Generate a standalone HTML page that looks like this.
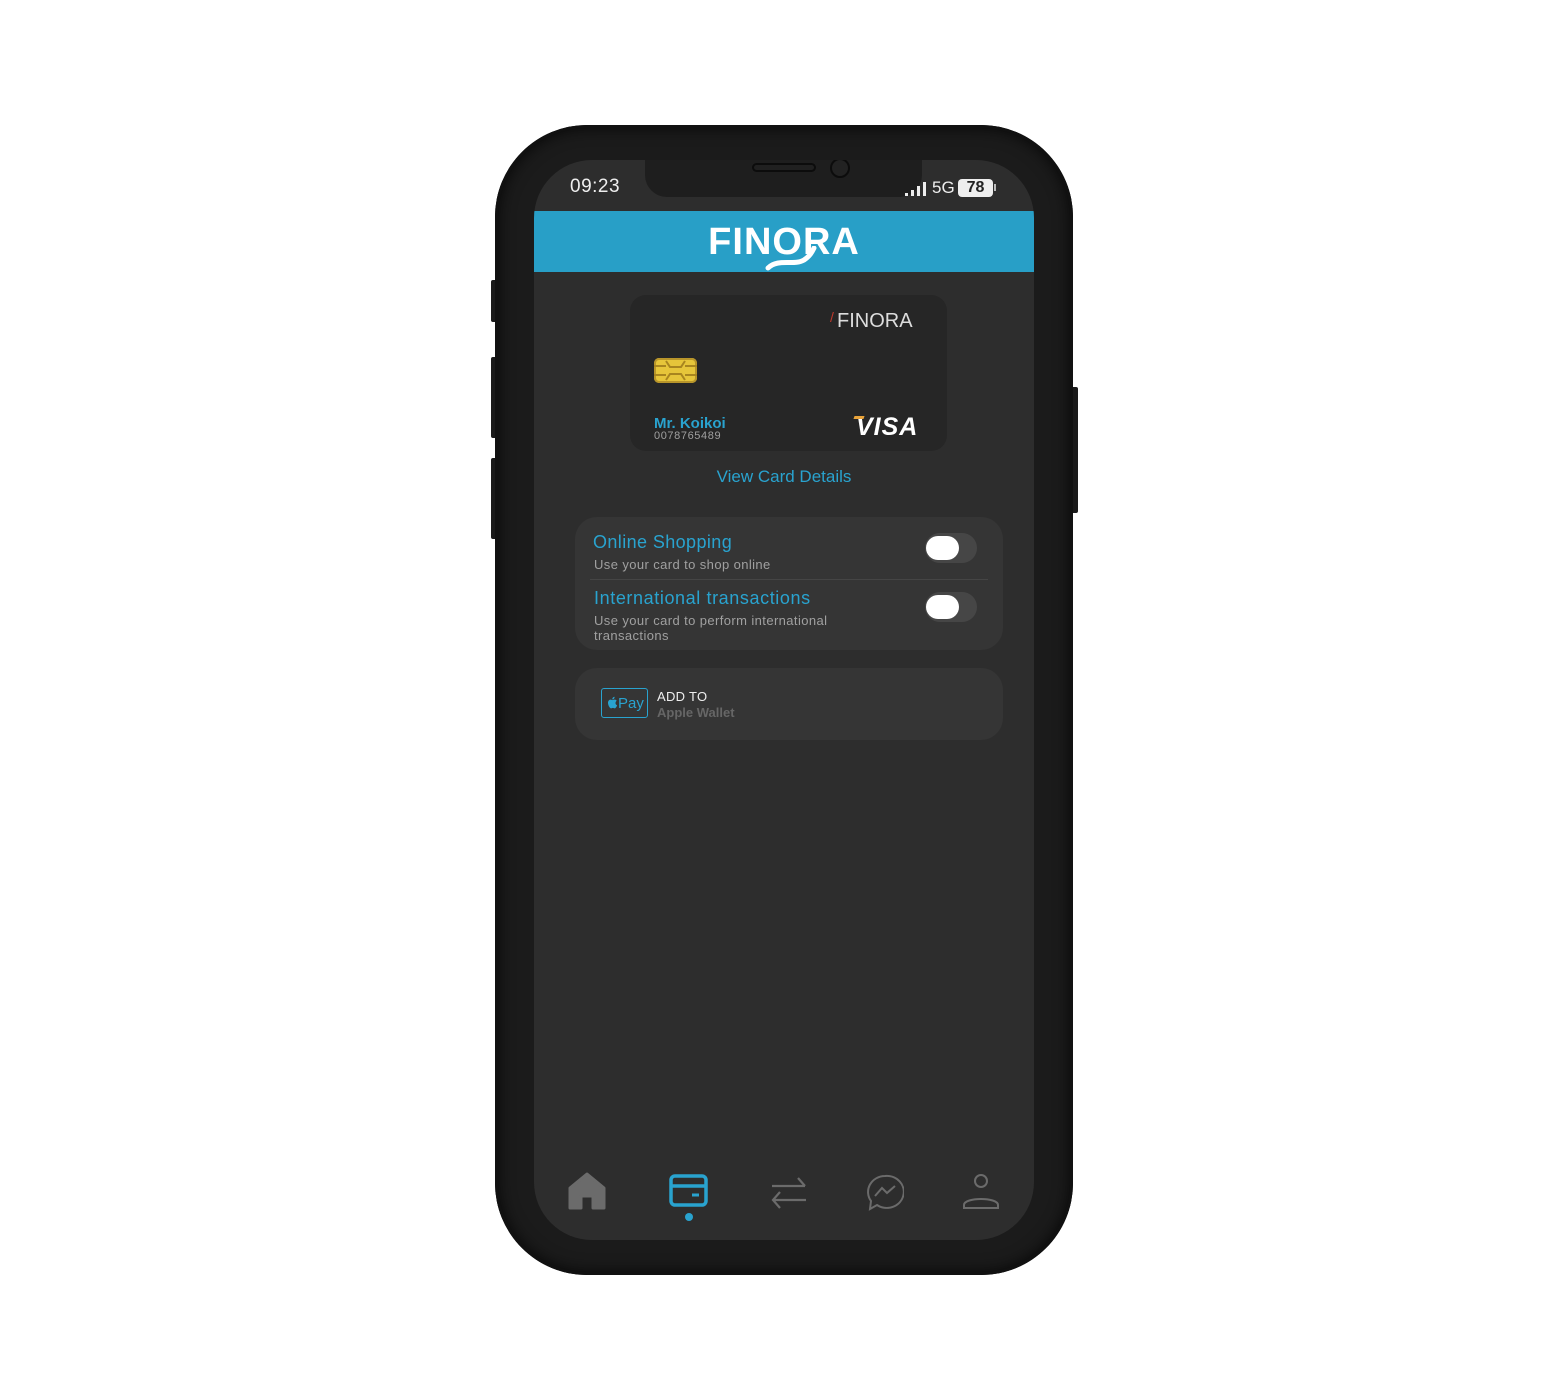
<!DOCTYPE html>
<html><head><meta charset="utf-8"><style>
*{margin:0;padding:0;box-sizing:border-box}
body{width:1568px;height:1400px;background:#fff;position:relative;overflow:hidden;font-family:"Liberation Sans","DejaVu Sans",sans-serif}
.abs{position:absolute}
.body{left:495px;top:125px;width:578px;height:1150px;border-radius:92px;background:#1b1b1b;box-shadow:inset 0 0 0 3px #111,inset 0 0 18px #000}
.btn{background:#1a1a1a;border-radius:2px}
.screen{left:534px;top:160px;width:500px;height:1080px;border-radius:58px;background:#2d2d2d;overflow:hidden}
.notch{left:111px;top:0;width:277px;height:37px;background:#1e1e1e;border-radius:0 0 22px 22px}
.hdr{left:0;top:51px;width:500px;height:61px;background:#289fc7}
.card{left:96px;top:135px;width:317px;height:156px;border-radius:16px;background:#262626}
.panel{background:#353535;border-radius:22px}
.t{color:#29a3cf}
.g{color:#a0a0a0}
.tog{width:52px;height:30px;border-radius:15px;background:#464646}
.tog div{position:absolute;left:1px;top:3px;width:33px;height:24px;border-radius:12px;background:#fff}
</style></head><body>
<div class="abs btn" style="left:491px;top:280px;width:6px;height:42px"></div>
<div class="abs btn" style="left:491px;top:357px;width:6px;height:81px"></div>
<div class="abs btn" style="left:491px;top:458px;width:6px;height:81px"></div>
<div class="abs btn" style="left:1071px;top:387px;width:7px;height:126px"></div>
<div class="abs body"></div>
<div class="abs screen">
  <div class="abs notch"></div>
  <div class="abs" style="left:218px;top:3px;width:64px;height:9px;border-radius:5px;border:2px solid #0c0c0c;background:#202020"></div>
  <div class="abs" style="left:296px;top:-2px;width:20px;height:20px;border-radius:50%;border:2px solid #0c0c0c;background:#222"></div>
  <div class="abs" style="left:36px;top:16px;color:#eee;font-size:19px;letter-spacing:.5px">09:23</div>
  <svg class="abs" style="left:370px;top:20px" width="26" height="17"><rect x="1" y="13" width="3" height="3" fill="#eee"/><rect x="7" y="10" width="3" height="6" fill="#eee"/><rect x="13" y="6" width="3" height="10" fill="#eee"/><rect x="19" y="2" width="3" height="14" fill="#eee"/></svg>
  <div class="abs" style="left:398px;top:18px;color:#eee;font-size:17px">5G</div>
  <div class="abs" style="left:424px;top:19px;width:35px;height:18px;border-radius:4px;background:#eee;color:#222;font-size:16px;font-weight:bold;text-align:center;line-height:18px">78</div>
  <div class="abs" style="left:460px;top:24px;width:2px;height:7px;background:#bbb"></div>
  <div class="abs hdr">
    <div class="abs" style="left:0;width:500px;top:10px;text-align:center;color:#fff;font-size:38px;font-weight:bold;letter-spacing:1px">FINORA</div>
    <svg class="abs" style="left:230px;top:35px" width="60" height="26"><path d="M4 22 C14 12 30 20 40 14 C46 10 48 6 50 2" stroke="#fff" stroke-width="5" fill="none" stroke-linecap="round"/></svg>
  </div>
  <div class="abs card">
    <div class="abs" style="left:200px;top:14px;color:#c0392b;font-size:14px">/</div>
    <div class="abs" style="left:207px;top:15px;color:#ddd;font-size:20px">FINORA</div>
    <div class="abs" style="left:24px;top:63px;width:43px;height:25px;border-radius:5px;background:#e6c53a;box-shadow:inset 0 0 0 2px #b8952a"></div>
    <svg class="abs" style="left:24px;top:63px" width="43" height="25"><path d="M0 8h12M0 17h12M31 8h12M31 17h12M12 3 l4 6 h11 l4 -6 M12 22 l4 -6 h11 l4 6" stroke="#a8851f" stroke-width="2" fill="none"/></svg>
    <div class="abs t" style="left:24px;top:120px;font-size:15px;font-weight:bold">Mr. Koikoi</div>
    <div class="abs g" style="left:24px;top:135px;font-size:11px;letter-spacing:.6px">0078765489</div>
    <div class="abs" style="left:226px;top:118px;color:#fff;font-size:25px;font-weight:bold;font-style:italic;letter-spacing:1px">VISA</div>
    <div class="abs" style="left:224px;top:121px;width:10px;height:3px;background:#e8a33a;transform:skewX(-20deg)"></div>
  </div>
  <div class="abs t" style="left:0;width:500px;top:307px;text-align:center;font-size:17px">View Card Details</div>
  <div class="abs panel" style="left:41px;top:357px;width:428px;height:133px">
    <div class="abs t" style="left:18px;top:15px;font-size:18px;letter-spacing:.4px">Online Shopping</div>
    <div class="abs g" style="left:19px;top:40px;font-size:13px;letter-spacing:.4px">Use your card to shop online</div>
    <div class="abs" style="left:15px;top:62px;width:398px;height:1px;background:#454545"></div>
    <div class="abs t" style="left:19px;top:71px;font-size:18px;letter-spacing:.6px">International transactions</div>
    <div class="abs g" style="left:19px;top:96px;font-size:13px;line-height:15px;letter-spacing:.4px">Use your card to perform international<br>transactions</div>
    <div class="abs tog" style="left:350px;top:16px"><div></div></div>
    <div class="abs tog" style="left:350px;top:75px"><div></div></div>
  </div>
  <div class="abs panel" style="left:41px;top:508px;width:428px;height:72px">
    <div class="abs" style="left:26px;top:20px;width:47px;height:30px;border:1.5px solid #29a3cf;border-radius:3px"></div>
    <svg class="abs" style="left:32px;top:28px" width="11" height="13"><path d="M8.5 7 C8.5 5.5 9.6 4.8 9.7 4.7 C9 3.7 8 3.6 7.6 3.6 C6.7 3.5 5.9 4.1 5.4 4.1 C5 4.1 4.3 3.6 3.6 3.6 C2.6 3.6 1 4.5 1 6.8 C1 8.3 1.6 9.9 2.3 10.9 C2.9 11.7 3.4 12.4 4.1 12.4 C4.8 12.4 5 11.9 5.9 11.9 C6.7 11.9 6.9 12.4 7.7 12.4 C8.4 12.4 8.9 11.6 9.4 10.9 C9.9 10.1 10.1 9.4 10.1 9.3 C10.1 9.3 8.5 8.7 8.5 7 Z M7 2.6 C7.4 2.1 7.7 1.4 7.6 0.7 C7 0.7 6.3 1.1 5.9 1.6 C5.5 2 5.2 2.7 5.3 3.4 C5.9 3.4 6.6 3.1 7 2.6 Z" fill="#29a3cf"/></svg>
    <div class="abs t" style="left:43px;top:27px;font-size:15px">Pay</div>
    <div class="abs" style="left:82px;top:21px;color:#eee;font-size:13px;letter-spacing:.3px">ADD TO</div>
    <div class="abs" style="left:82px;top:37px;color:#666;font-size:13px;font-weight:bold">Apple Wallet</div>
  </div>
  <!-- nav -->
  <svg class="abs" style="left:34px;top:1012px" width="40" height="38"><path d="M2 36 V16 L19 2 L36 16 V36 H25 V24 H13 V36 Z" fill="#6b6b6b" stroke="#6b6b6b" stroke-width="3" stroke-linejoin="round"/></svg>
  <svg class="abs" style="left:134px;top:1013px" width="42" height="38"><rect x="3" y="3" width="35" height="29" rx="4" fill="none" stroke="#29a3cf" stroke-width="3.5"/><path d="M3 13 H38" stroke="#29a3cf" stroke-width="3.5"/><path d="M24 22 H31" stroke="#29a3cf" stroke-width="3"/></svg>
  <div class="abs" style="left:151px;top:1053px;width:8px;height:8px;border-radius:50%;background:#29a3cf"></div>
  <svg class="abs" style="left:236px;top:1012px" width="38" height="38"><path d="M2 14 H35 M28 6 L35 14 M36 28 H3 M10 20 L3 28 L10 36" stroke="#6b6b6b" stroke-width="2.2" fill="none"/></svg>
  <svg class="abs" style="left:332px;top:1014px" width="38" height="38"><path d="M19 2 A17 16 0 1 1 11 31 L4 35 L5 27 A17 16 0 0 1 19 2 Z" fill="none" stroke="#6b6b6b" stroke-width="2"/><path d="M9 22 L16 14 L21 19 L29 12" stroke="#6b6b6b" stroke-width="2" fill="none"/></svg>
  <svg class="abs" style="left:428px;top:1012px" width="38" height="38"><circle cx="19" cy="9" r="6" fill="none" stroke="#6b6b6b" stroke-width="2"/><path d="M2 36 V33 C2 25 36 25 36 33 V36 Z" fill="none" stroke="#6b6b6b" stroke-width="2"/></svg>
</div>
</body></html>
